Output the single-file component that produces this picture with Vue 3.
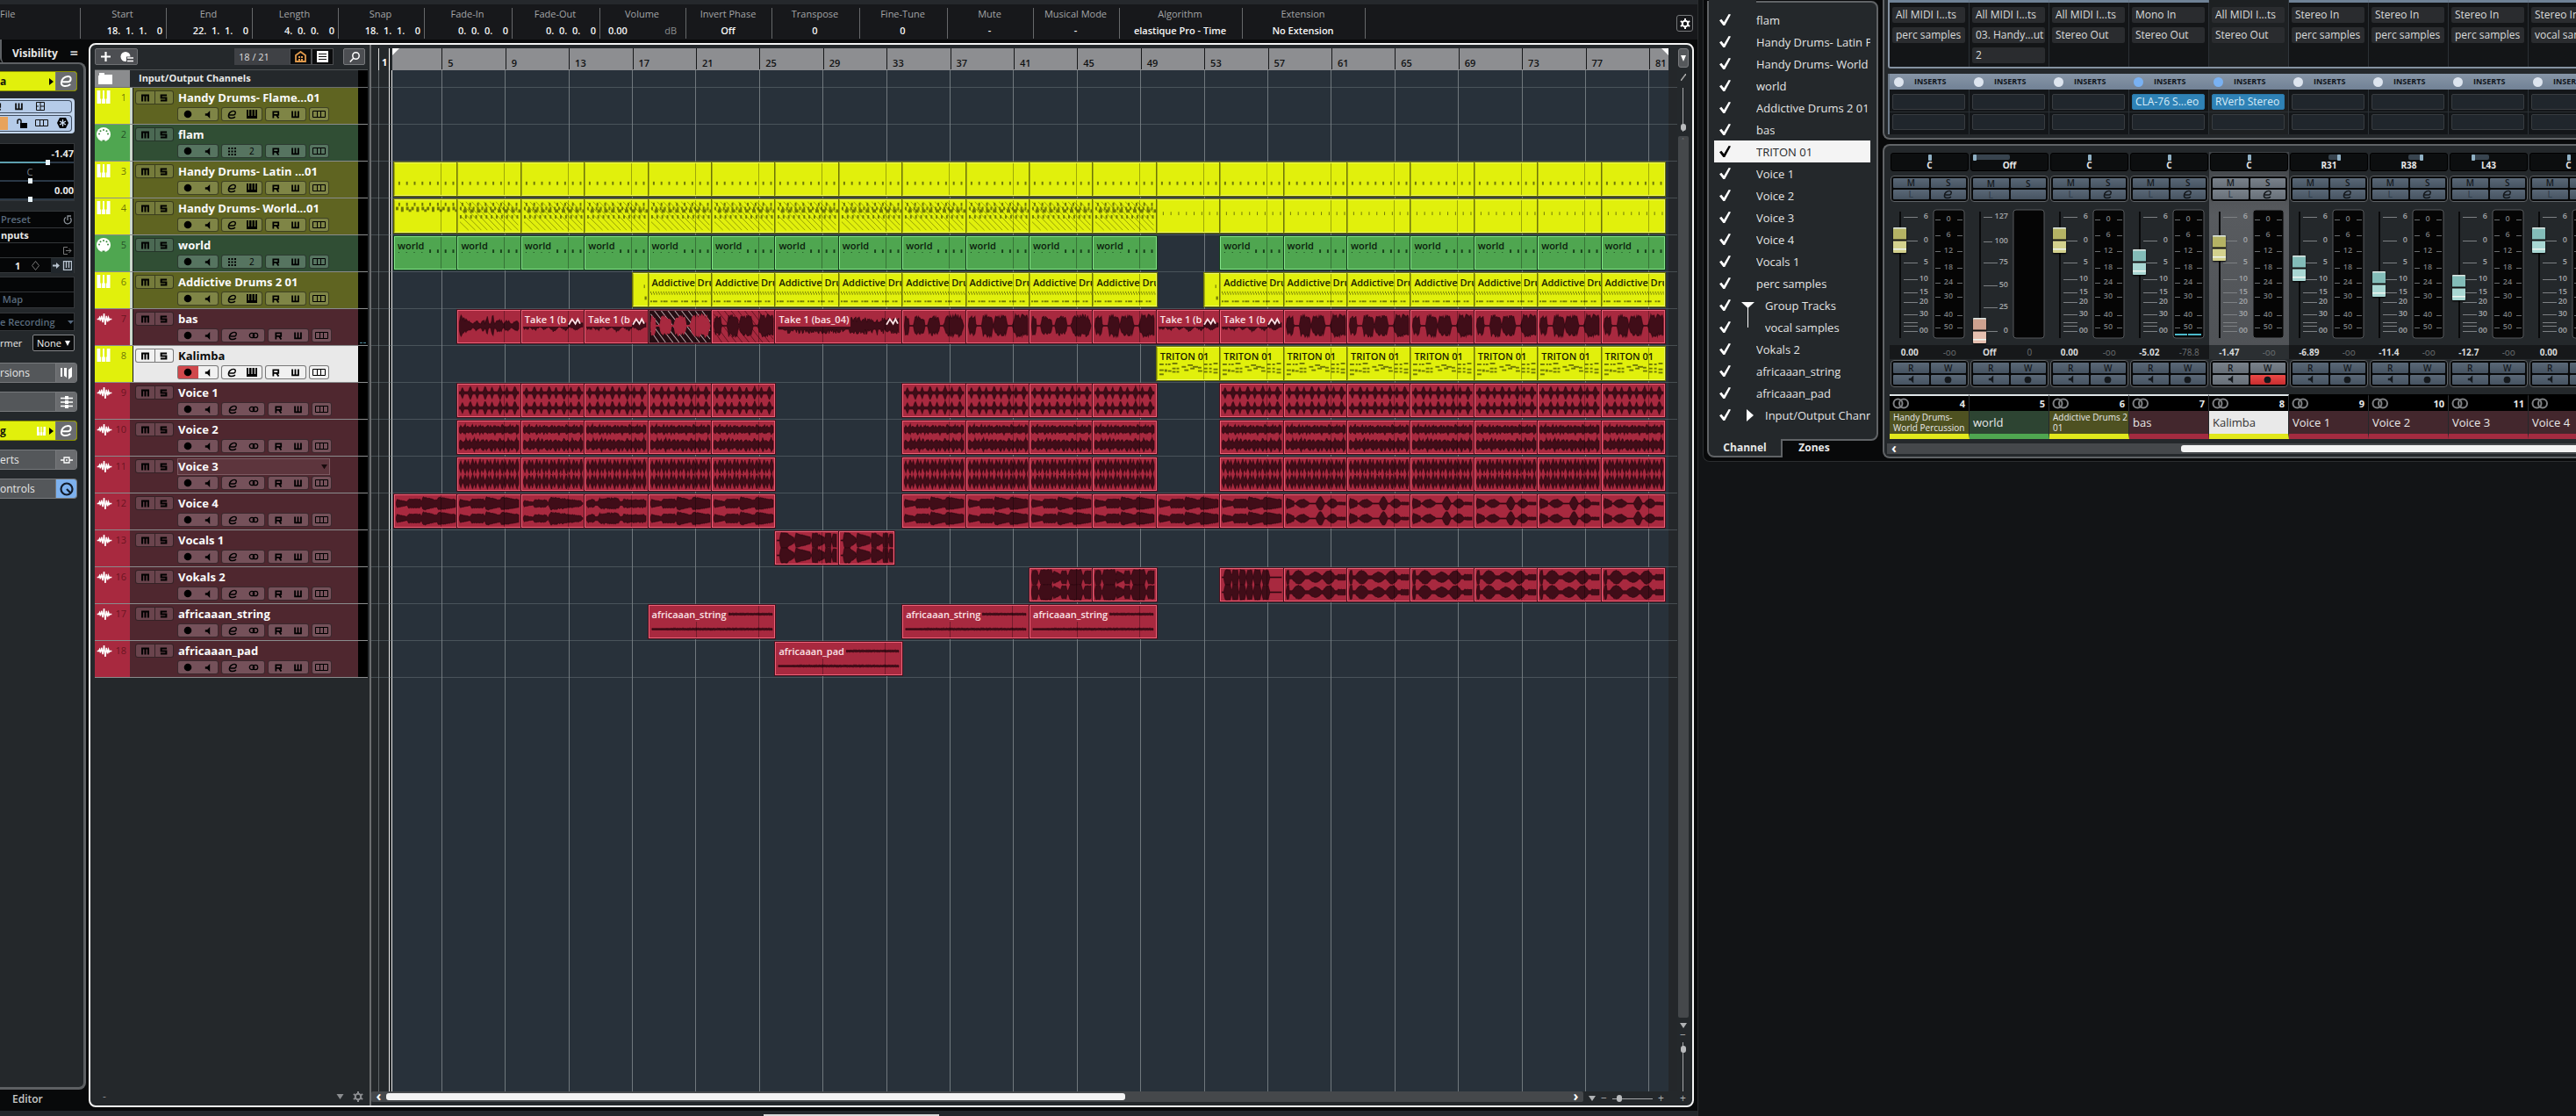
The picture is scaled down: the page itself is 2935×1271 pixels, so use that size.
<script setup>
const info = [
  { label: 'File', value: '', w: 92, kind: 'first' },
  { label: 'Start', value: '18.  1.  1.    0', w: 98, kind: 'right' },
  { label: 'End', value: '22.  1.  1.    0', w: 98, kind: 'right' },
  { label: 'Length', value: '4.  0.  0.    0', w: 98, kind: 'right' },
  { label: 'Snap', value: '18.  1.  1.    0', w: 98, kind: 'right' },
  { label: 'Fade-In', value: '0.  0.  0.    0', w: 100, kind: 'right' },
  { label: 'Fade-Out', value: '0.  0.  0.    0', w: 100, kind: 'right' },
  { label: 'Volume', value: '0.00', unit: 'dB', w: 98, kind: 'split' },
  { label: 'Invert Phase', value: 'Off', w: 98 },
  { label: 'Transpose', value: '0', w: 100 },
  { label: 'Fine-Tune', value: '0', w: 100 },
  { label: 'Mute', value: '-', w: 98 },
  { label: 'Musical Mode', value: '-', w: 98 },
  { label: 'Algorithm', value: 'elastique Pro - Time', w: 140 },
  { label: 'Extension', value: 'No Extension', w: 140 },
]

/* ---------- waveform drawing ---------- */
function random(seed) {
  let s = seed * 7919 + 13
  return () => {
    s = (s * 1103515245 + 12345) % 2147483648
    return s / 2147483648
  }
}
function wave(segs, cy, half, seed, base = 0.05, rough = 0.25, n = 72) {
  const r = random(seed)
  const up = []
  const down = []
  for (let i = 0; i <= n; i++) {
    const t = i / n
    let a = 0
    for (const [from, to, amp, shape] of segs) {
      if (t < from || t > to) continue
      const p = (t - from) / (to - from)
      let v = Math.min(1, Math.sin(Math.PI * p) * 2.4)
      if (shape === 'decay') v = Math.min(1, p * 9 + 0.35) * (1 - p * 0.55)
      if (shape === 'spike') v = 1 - Math.abs(p * 2 - 1)
      if (shape === 'round') v = Math.sin(Math.PI * p)
      a = Math.max(a, amp * v)
    }
    const u = Math.max(base, a * (1 - rough * r()))
    const d = Math.max(base, a * (1 - rough * r()))
    const x = (2 + t * 96).toFixed(2)
    up.push(`${x},${(cy - u * half).toFixed(2)}`)
    down.unshift(`${x},${(cy + d * half).toFixed(2)}`)
  }
  return 'M' + up.join('L') + 'L' + down.join('L') + 'Z'
}
const stereo = (segs, seed, base, rough, n, half = 9) => [
  wave(segs, 10, half, seed, base, rough, n),
  wave(segs, 28, half, seed, base, rough, n),
]
const spikes = (count, amp, width) =>
  Array.from({ length: count }, (_, i) => {
    const c = (i + 0.4) / count
    const a = i % 2 ? amp : amp * 0.85
    return [c - width / 2, c + width / 2 + (i % 2 ? 0.02 : 0), a, 'spike']
  })
const waves = {
  basIntro: [wave([[0, 0.12, 1, 'decay'], [0.08, 0.22, 0.6, 'decay'], [0.21, 0.38, 0.4, 'round'], [0.36, 0.44, 0.6, 'round'], [0.43, 0.5, 1, 'spike'], [0.52, 0.6, 1, 'spike'], [0.58, 0.76, 0.55, 'round'], [0.74, 0.88, 0.5, 'round'], [0.87, 1.04, 0.4, 'round']], 18, 16, 3, 0.15, 0.4)],
  basA: [wave([[0, 0.08, 0.9], [0.15, 0.35, 0.8], [0.39, 0.6, 0.8], [0.66, 1, 0.95]], 18, 15, 5, 0.04, 0.4)],
  basB: [wave([[0, 0.13, 0.8], [0.22, 0.42, 0.95], [0.42, 0.66, 0.85], [0.74, 1.04, 0.95]], 18, 15, 6, 0.04, 0.4)],
  take: [wave([[0, 0.1, 0.5], [0.08, 0.3, 0.6, 'round'], [0.25, 0.45, 0.5, 'round'], [0.4, 0.62, 0.7, 'round'], [0.6, 0.8, 0.6, 'round'], [0.76, 1, 0.6, 'round']], 17, 12, 8, 0.2, 0.4)],
  takeLong: [wave([[0, 0.6, 0.7], [0.58, 0.7, 0.8], [0.68, 0.8, 0.75], [0.8, 0.84, 1, 'spike'], [0.83, 1.05, 0.7]], 18, 14, 9, 0.3, 0.6, 140)],
  voice1: stereo(spikes(8, 1, 0.07), 2, 0.16, 0.15, 96),
  voice2: [wave(spikes(16, 0.9, 0.11), 10, 8, 4, 0.35, 0.45, 90), wave(spikes(14, 1, 0.12), 28, 9, 7, 0.3, 0.35, 90)],
  voice3: stereo(spikes(16, 1.1, 0.065), 5, 0.12, 0.2, 120),
  voice4a: stereo([[0, 0.19, 0.6, 'decay'], [0.17, 0.44, 0.62], [0.43, 0.7, 1, 'decay'], [0.68, 1.1, 0.95, 'decay']], 11, 0.2, 0.15),
  voice4b: stereo([[0, 0.16, 0.5, 'decay'], [0.15, 0.42, 0.55], [0.42, 0.98, 0.95, 'decay']], 12, 0.12, 0.25),
  voice4c: stereo([[0, 0.15, 0.6], [0.17, 0.58, 0.8], [0.56, 1.04, 0.6]], 13, 0.25, 0.35),
  voice4d: stereo([[0, 0.13, 0.8, 'decay'], [0.15, 0.4, 0.6, 'round'], [0.5, 0.65, 0.95, 'round'], [0.68, 0.88, 0.65, 'round'], [0.85, 1.1, 0.2]], 14, 0.07, 0.15),
  vocalsA: stereo([[0.04, 0.2, 1.05], [0.18, 0.28, 0.9, 'decay'], [0.3, 0.56, 1.05, 'decay'], [0.58, 0.7, 1], [0.69, 0.8, 0.9, 'decay'], [0.8, 0.92, 1], [0.92, 1.1, 0.9]], 15, 0.07, 0.1),
  vokalsA: stereo([[0, 0.11, 1], [0.12, 0.37, 1.05], [0.36, 0.48, 0.95, 'decay'], [0.49, 0.6, 0.9], [0.61, 0.87, 1.05], [0.87, 1.1, 0.9]], 16, 0.25, 0.1),
  vokalsB: stereo([[0.03, 0.16, 1.05], [0.16, 0.28, 1], [0.29, 0.4, 1.05], [0.41, 0.52, 1], [0.53, 0.66, 1.05], [0.67, 0.8, 1]], 17, 0.05, 0.1),
  vokalsC: stereo([[0, 0.05, 1], [0.08, 0.34, 0.95, 'round'], [0.36, 0.62, 0.75, 'round'], [0.6, 0.84, 0.95, 'round'], [0.84, 1.1, 0.4]], 18, 0.2, 0.15),
  flat: stereo([[0, 1.2, 0.16]], 19, 0.1, 0.5, 160),
}

/* ---------- note drawing, as [x, y, w, h] in a 72 x 38 box ---------- */
const row = (count, x0, step, y, w, h) =>
  Array.from({ length: count }, (_, i) => [x0 + i * step, y, w, h])
const notes = {
  pulses: row(8, 4, 9, 22, 2, 4),
  busyTop: [...row(8, 4, 9, 3, 2, 4), ...row(12, 1, 6, 8, 3, 4), ...row(8, 7, 9, 11, 3, 3)],
  busy: [...row(8, 4, 9, 3, 2, 4), ...row(14, 2, 5, 8, 2, 4), ...row(9, 6, 8, 11, 4, 4), ...row(12, 2, 6, 18, 2, 4)],
  ticks: row(8, 6, 9, 14, 1, 4),
  world: [...row(4, 4, 9, 18, 1, 1), ...row(4, 40, 9, 15, 2, 4)],
  kit: [...row(24, 1, 3, 21, 1, 2), ...row(24, 2, 3, 23, 1, 2), ...row(11, 1, 6, 32, 2, 2), ...row(6, 4, 12, 32, 3, 2)],
  pickup: [[52, 13, 5, 4], [56, 27, 10, 4]],
  melody: [[2, 19, 5, 2], [9, 19, 2, 2], [12, 19, 3, 2], [17, 18, 6, 2], [2, 26, 5, 2], [2, 31, 5, 2], [8, 26, 3, 3], [12, 27, 4, 2], [17, 24, 4, 2], [22, 24, 3, 2], [17, 28, 4, 2], [22, 28, 3, 2], [28, 22, 5, 2], [31, 26, 5, 2], [35, 20, 6, 2], [41, 22, 6, 2], [38, 24, 5, 2], [47, 23, 4, 2], [47, 27, 5, 2], [54, 19, 4, 2], [60, 19, 3, 2], [65, 18, 5, 2], [54, 24, 4, 2], [60, 24, 3, 2], [54, 28, 4, 2], [60, 28, 3, 2], [65, 25, 5, 2], [65, 29, 5, 2]],
}

const run = (from, to, extra) => {
  const out = []
  for (let b = from; b < to; b += 4) out.push({ bar: b, len: 4, ...extra })
  return out
}
const sung = (w) => [...run(6, 26, { wave: w }), ...run(34, 50, { wave: w }), ...run(54, 82, { wave: w })]
const take = { wave: 'take', label: 'Take 1 (b', take: true }

const tracks = [
  { n: 1, name: 'Handy Drums- Flame...01', type: 'inst', clips: [] },
  { n: 2, name: 'flam', type: 'midi', clips: [] },
  { n: 3, name: 'Handy Drums- Latin ...01', type: 'inst', clips: run(2, 82, { notes: 'pulses' }) },
  {
    n: 4, name: 'Handy Drums- World...01', type: 'inst',
    clips: [{ bar: 2, len: 4, notes: 'busyTop' }, ...run(6, 50, { notes: 'busy', hatch: true }), ...run(50, 82, { notes: 'ticks' })],
  },
  { n: 5, name: 'world', type: 'midi', clips: [...run(2, 50, { notes: 'world', label: 'world' }), ...run(54, 82, { notes: 'world', label: 'world' })] },
  {
    n: 6, name: 'Addictive Drums 2 01', type: 'inst',
    clips: [
      { bar: 17, len: 1, notes: 'pickup' }, ...run(18, 50, { notes: 'kit', label: 'Addictive Dru' }),
      { bar: 53, len: 1, notes: 'pickup' }, ...run(54, 82, { notes: 'kit', label: 'Addictive Dru' }),
    ],
  },
  {
    n: 7, name: 'bas', type: 'audio', sel: true,
    clips: [
      { bar: 6, len: 4, wave: 'basIntro' },
      ...run(10, 18, take),
      { bar: 18, len: 4, wave: 'basA', invert: true, hatch: true },
      { bar: 22, len: 4, wave: 'basB', hatch: true },
      { bar: 26, len: 8, wave: 'takeLong', label: 'Take 1 (bas_04)', take: true },
      { bar: 34, len: 4, wave: 'basA' }, { bar: 38, len: 4, wave: 'basB' },
      { bar: 42, len: 4, wave: 'basA' }, { bar: 46, len: 4, wave: 'basB' },
      ...run(50, 58, take),
      ...run(58, 82, { wave: 'basB' }),
    ],
  },
  { n: 8, name: 'Kalimba', type: 'inst', active: true, clips: run(50, 82, { notes: 'melody', label: 'TRITON 01' }) },
  { n: 9, name: 'Voice 1', type: 'audio', clips: sung('voice1') },
  { n: 10, name: 'Voice 2', type: 'audio', clips: sung('voice2') },
  { n: 11, name: 'Voice 3', type: 'audio', hover: true, clips: sung('voice3') },
  {
    n: 12, name: 'Voice 4', type: 'audio',
    clips: [
      ...run(2, 10, { wave: 'voice4a' }), { bar: 10, len: 4, wave: 'voice4b' }, { bar: 14, len: 4, wave: 'voice4c' },
      ...run(18, 26, { wave: 'voice4a' }), ...run(34, 58, { wave: 'voice4a' }), ...run(58, 82, { wave: 'voice4d' }),
    ],
  },
  { n: 13, name: 'Vocals 1', type: 'audio', clips: [{ bar: 26, len: 4, wave: 'vocalsA' }, { bar: 30, len: 3.5, wave: 'vocalsA' }] },
  { n: 16, name: 'Vokals 2', type: 'audio', clips: [...run(42, 50, { wave: 'vokalsA' }), { bar: 54, len: 4, wave: 'vokalsB' }, ...run(58, 82, { wave: 'vokalsC' })] },
  {
    n: 17, name: 'africaaan_string', type: 'audio',
    clips: [18, 34, 42].map((bar) => ({ bar, len: 8, wave: 'flat', label: 'africaaan_string' })),
  },
  { n: 18, name: 'africaaan_pad', type: 'audio', clips: [{ bar: 26, len: 8, wave: 'flat', label: 'africaaan_pad' }] },
]
for (const t of tracks) if (t.n < 7) t.sel = true
const trackIcon = { inst: 'keys', midi: 'din', audio: 'audio' }

const span = (c) => ({ gridColumn: `${(c.bar - 2) * 2 + 1} / span ${c.len * 2}` })
const barLines = (c) => {
  const out = []
  for (let b = 5; b <= 81; b += 4) if (b > c.bar && b < c.bar + c.len) out.push(((b - c.bar) / c.len) * 100)
  return out
}
const ruler = Array.from({ length: 20 }, (_, i) => 5 + i * 4)

/* ---------- mixer ---------- */
const list = [
  'flam', 'Handy Drums- Latin Pe', 'Handy Drums- World P', 'world', 'Addictive Drums 2 01', 'bas',
  'TRITON 01', 'Voice 1', 'Voice 2', 'Voice 3', 'Voice 4', 'Vocals 1', 'perc samples', 'Group Tracks', 'vocal samples',
  'Vokals 2', 'africaaan_string', 'africaaan_pad', 'Input/Output Channe',
]
const strips = [
  { n: 4, name: 'Handy Drums- World Percussion', small: true, color: 'y', io: ['All MIDI I...ts', 'perc samples'], pan: 'C', c: 273, v: '0.00', p: '-oo', cap: 'yel', sel: true },
  { n: 5, name: 'world', color: 'g', io: ['All MIDI I...ts', '03. Handy...ut', '2'], pan: 'Off', bar: [3, 44], c: 375, v: 'Off', p: '0', cap: 'pink', ctrl: true, sel: true },
  { n: 6, name: 'Addictive Drums 2 01', small: true, color: 'y', io: ['All MIDI I...ts', 'Stereo Out'], pan: 'C', c: 273, v: '0.00', p: '-oo', cap: 'yel', sel: true },
  { n: 7, name: 'bas', color: 'r', io: ['Mono In', 'Stereo Out'], fx: 'CLA-76 S...eo', pan: 'C', c: 298, v: '-5.02', p: '-78.8', cap: 'teal', sel: true, level: true },
  { n: 8, name: 'Kalimba', color: 'k', io: ['All MIDI I...ts', 'Stereo Out'], fx: 'RVerb Stereo', pan: 'C', c: 282, v: '-1.47', p: '-oo', cap: 'yel', sel: true, active: true },
  { n: 9, name: 'Voice 1', color: 'r', io: ['Stereo In', 'perc samples'], pan: 'R31', bar: [43, 57], c: 305, v: '-6.89', p: '-oo', cap: 'teal' },
  { n: 10, name: 'Voice 2', color: 'r', io: ['Stereo In', 'perc samples'], pan: 'R38', bar: [43, 60], c: 322, v: '-11.4', p: '-oo', cap: 'teal' },
  { n: 11, name: 'Voice 3', color: 'r', io: ['Stereo In', 'perc samples'], pan: 'L43', bar: [25, 44], c: 326, v: '-12.7', p: '-oo', cap: 'teal' },
  { n: 12, name: 'Voice 4', color: 'r', io: ['Stereo In', 'vocal samples'], pan: 'C', c: 273, v: '0.00', p: '-oo', cap: 'teal' },
]
const dbScale = [[6, 9], [0, 36], [5, 61], [10, 80], [15, 95], [20, 106], [30, 120], ['00', 139]]
const midiScale = [[127, 9], [100, 37], [75, 61], [50, 87], [25, 112], [0, 139]]
const meterScale = [[0, 11], [6, 29], [12, 47], [18, 66], [24, 83], [30, 99], [40, 120], [50, 134]]
const panMark = (s) => {
  if (!s.bar) return 44
  return s.pan.startsWith('R') ? s.bar[1] - 2 : s.bar[0] + 1
}
const tickEnd = (t) => (String(t).length > 2 ? 25 : 31)
</script>

<template>
  <div class="page">
    <svg class="defs" aria-hidden="true">
      <symbol id="keys" viewBox="0 0 16 16"><path d="M0 0H4V10H5V16H0ZM6 10H7V0H9V10H10V16H6ZM11 10H12V0H16V16H11Z" fill="#fff" /></symbol>
      <symbol id="din" viewBox="0 0 16 16"><circle cx="8" cy="8" r="8" fill="#fff" /><g fill="#3c8a3e"><circle cx="3" cy="7.500" r="1" /><circle cx="4.500" cy="4.300" r="1" /><circle cx="8" cy="3" r="1" /><circle cx="11.500" cy="4.300" r="1" /><circle cx="13" cy="7.500" r="1" /><path d="M6.500 14.500H9.500V16H6.500Z" /></g></symbol>
      <symbol id="audio" viewBox="0 0 18 14"><path d="M0 7H2L3 5L4 9L5.500 3L7 11L8.500 0L10 14L11.500 3L13 10L14 5L15 8L16 7H18" fill="none" stroke="#fff" stroke-width="1.600" /></symbol>
      <symbol id="m" viewBox="0 0 10 9"><path d="M1.200 9V1.200H8.800V9M5 1V9" fill="none" stroke="currentColor" stroke-width="2.300" /></symbol>
      <symbol id="s" viewBox="0 0 10 9"><path d="M9 1.200H1.800V4.500H8.200V7.800H1" fill="none" stroke="currentColor" stroke-width="2.200" /></symbol>
      <symbol id="r" viewBox="0 0 10 9"><path d="M1.500 9V1H8V5H2M5.500 5L8.300 9" fill="none" stroke="currentColor" stroke-width="2" /></symbol>
      <symbol id="w" viewBox="0 0 10 9"><path d="M1.200 0V7.800H8.800V0M5 0V8" fill="none" stroke="currentColor" stroke-width="2" /></symbol>
      <symbol id="rec" viewBox="0 0 10 10"><circle cx="5" cy="5" r="4.300" fill="currentColor" /></symbol>
      <symbol id="mon" viewBox="0 0 10 10"><path d="M2 3.500H4.500L8 0V10L4.500 6.500H2Z" fill="currentColor" /></symbol>
      <symbol id="e" viewBox="0 0 12 12"><path d="M2.500 6.600H7.800C10.600 6.200 11.200 1.500 7.600 1.500C4.200 1.500 1.500 4.600 1.500 7.400C1.500 11.200 6.500 11.200 9.800 8.800" fill="none" stroke="currentColor" stroke-width="1.600" /></symbol>
      <symbol id="piano" viewBox="0 0 12 10"><path d="M0 0H2V7H3V0H5.500V7H6.500V0H9V7H10V0H12V10H0Z" fill="currentColor" /></symbol>
      <symbol id="link" viewBox="0 0 12 8"><circle cx="4" cy="4" r="2.700" fill="none" stroke="currentColor" stroke-width="1.300" /><circle cx="8" cy="4" r="2.700" fill="none" stroke="currentColor" stroke-width="1.300" /></symbol>
      <symbol id="lanes" viewBox="0 0 15 8"><path d="M.5 .5H14.500V7.500H.5ZM5.500 0V8M9.500 0V8" fill="none" stroke="currentColor" /></symbol>
      <symbol id="dots" viewBox="0 0 9 9"><path d="M0 1H9M0 4.500H9M0 8H9" stroke="currentColor" stroke-width="2" stroke-dasharray="2 1.500" /></symbol>
      <symbol id="gear" viewBox="0 0 12 12"><circle cx="6" cy="6" r="3.200" fill="none" stroke="currentColor" stroke-width="2" /><path d="M6 0V2.500M6 9.500V12M.8 3L3 4.300M9 7.700L11.200 9M11.200 3L9 4.300M3 7.700L.8 9" stroke="currentColor" stroke-width="2" /></symbol>
      <symbol id="tri" viewBox="0 0 8 6"><path d="M0 0H8L4 6Z" fill="currentColor" /></symbol>
      <symbol id="zig" viewBox="0 0 14 9"><path d="M1 8L4.500 2L8 7L10.500 2L13 7" fill="none" stroke="currentColor" stroke-width="1.700" /></symbol>
    </svg>

    <section class="daw">
      <header class="infoline">
        <div v-for="c in info" :key="c.label" class="cell" :class="c.kind" :style="{ width: c.w + 'px' }">
          <span class="lab">{{ c.label }}</span>
          <span class="val">{{ c.value }}<i v-if="c.unit">{{ c.unit }}</i></span>
        </div>
        <button class="cog" aria-label="Set up info line"><svg width="12" height="12"><use href="#gear" /></svg></button>
      </header>

      <div class="work">
        <aside class="inspector">
          <div class="tabs"><a href="#visibility">Visibility</a><span class="menu">=</span></div>
          <div class="body">
            <div class="head yellow"><b>a</b><svg width="5" height="8" class="arrow"><path d="M0 0L5 4L0 8Z" /></svg><button aria-label="Edit instrument"><svg width="15" height="15"><use href="#e" /></svg></button></div>
            <div class="bluebox">
              <div><svg width="9" height="9"><use href="#r" /></svg><svg width="9" height="9"><use href="#w" /></svg><svg width="10" height="10" viewBox="0 0 10 10"><path d="M.5 .5H9.500V9.500H.5ZM5 0V10M5 5H10M0 5H3" fill="none" stroke="#111" /></svg></div>
              <div><span class="orange"></span><svg width="12" height="11" viewBox="0 0 12 11"><path d="M4 5H12V11H4Z" /><path d="M1 6V3A2 2 0 0 1 5 3V5" fill="none" stroke="#111" stroke-width="1.500" /></svg><svg width="15" height="8"><use href="#lanes" /></svg><svg width="13" height="12" viewBox="0 0 13 12"><path d="M3 0H10L13 6L10 12H3L0 6Z" /><path d="M6.500 2V10M3 4L10 8M10 4L3 8" stroke="#cfe0f5" stroke-width="1.300" /></svg></div>
            </div>
            <div class="black sliders">
              <b>-1.47</b><input type="range" aria-label="Volume" class="blue" value="66" /><i>C</i><input type="range" aria-label="Pan" value="40" /><b>0.00</b><input type="range" aria-label="Delay" value="40" />
            </div>
            <div class="black io">
              <div class="dim">Preset<svg width="10" height="11" viewBox="0 0 10 11"><path d="M3 2.500A4 4 0 1 0 8 3M5 6V1L9 1" fill="none" stroke="#8a9097" stroke-width="1.300" /></svg></div>
              <div><b>nputs</b></div>
              <div><span></span><svg width="10" height="9" viewBox="0 0 10 9"><path d="M5 .5H.5V8.500H5M3 4.500H9M6.500 2L9 4.500L6.500 7" fill="none" stroke="#777" /></svg></div>
              <div class="one"><b>1</b><svg width="9" height="11" viewBox="0 0 9 11"><path d="M4.500 .5L8.500 5.500L4.500 10.500L.5 5.500Z" fill="none" stroke="#777" /></svg><span class="route"><svg width="22" height="11" viewBox="0 0 22 11"><path d="M0 4.500H4V2L8 5.500L4 9V6.500H0Z" fill="#b8c3cf" /><path d="M12.500 .5H21.500V10.500H12.500ZM15.500 0V8M18.500 0V8" fill="none" stroke="#b8c3cf" stroke-width="1.300" /></svg></span></div>
            </div>
            <div class="black map"><div></div><div class="dim">&nbsp;Map</div></div>
            <div class="black recd dim">e Recording<svg width="7" height="4"><path d="M0 0H7L3.500 4Z" fill="#56697f" /></svg></div>
            <label class="former">rmer<select><option>None</option></select></label>
            <div class="bars">
              <div class="head"><span>rsions</span><button aria-label="Versions"><svg width="14" height="14" viewBox="0 0 14 14"><path d="M0 1H2V11H0ZM4 1H7V12L4 10ZM9 3L13 0V11L9 14Z" /></svg></button></div>
              <div class="head"><span></span><button aria-label="Equalizers"><svg width="14" height="14" viewBox="0 0 14 14"><path d="M0 2.500H14M0 7H14M0 11.500H14" stroke="#fff" stroke-width="1.500" /><path d="M5 0H9V4H5ZM5 5H9V9H5ZM5 10H9V14H5Z" /></svg></button></div>
              <div class="head yellow"><b>g</b><svg width="10" height="10" class="kb"><use href="#keys" /></svg><svg width="5" height="8" class="arrow"><path d="M0 0L5 4L0 8Z" /></svg><button aria-label="Edit channel"><svg width="15" height="15"><use href="#e" /></svg></button></div>
              <div class="head"><span>erts</span><button aria-label="Inserts"><svg width="14" height="8" viewBox="0 0 14 8"><path d="M0 4H4M10 4H14M4 1H10V7H4ZM6 4H8" fill="none" stroke="#fff" stroke-width="1.300" /></svg></button></div>
              <div class="head"><span>ontrols</span><button class="lit" aria-label="Quick controls"><svg width="16" height="16" viewBox="0 0 16 16"><circle cx="8" cy="8" r="6.500" fill="none" stroke="#121c2c" stroke-width="2.200" /><path d="M8 8L12 12" stroke="#121c2c" stroke-width="2.200" /></svg></button></div>
            </div>
          </div>
          <div class="editor"><a href="#editor">Editor</a></div>
        </aside>

        <main class="project">
          <div class="tracklist">
            <div class="tools">
              <div class="add"><button aria-label="Add track"><svg width="11" height="11" viewBox="0 0 11 11"><path d="M5.500 0V11M0 5.500H11" stroke="#fff" stroke-width="2.200" /></svg></button><button aria-label="Use preset"><svg width="15" height="12" viewBox="0 0 15 12"><circle cx="6" cy="5.500" r="5.500" fill="#fff" /><path d="M7 5.500H15V12H7Z" fill="#4c4e52" /><path d="M8 7H15M8 10.500H15" stroke="#fff" stroke-width="1.500" /></svg></button></div>
              <span class="count">18 / 21</span>
              <button class="tg" aria-label="Track visibility"><svg width="13" height="13" viewBox="0 0 13 13"><path d="M1 5L6.500 1L12 5V12H1Z" fill="none" stroke="#e09a4c" stroke-width="1.800" /><path d="M4 6H6V8H4ZM7 6H9V8H7ZM4 9H6V11H4ZM7 9H9V11H7Z" fill="#e09a4c" /></svg></button>
              <button class="tg" aria-label="Divide list"><svg width="13" height="13" viewBox="0 0 13 13"><path d="M0 0H13V13H0Z" fill="#fff" /><path d="M2 3.500H11M2 6.500H11M2 9.500H11" stroke="#111" stroke-width="1.200" /></svg></button>
              <button class="find" aria-label="Find tracks"><svg width="12" height="12" viewBox="0 0 12 12"><circle cx="7.500" cy="4.500" r="3.700" fill="none" stroke="#fff" stroke-width="1.500" /><path d="M5 7L.8 11.500" stroke="#fff" stroke-width="1.500" /></svg></button>
            </div>
            <div class="folder"><span><svg width="16" height="13" viewBox="0 0 16 13"><path d="M0 3H1V0H7V2H16V13H0Z" fill="#fff" /></svg></span><b>Input/Output Channels</b></div>

            <div v-for="t in tracks" :key="t.n" class="track" :class="[t.type, { active: t.active, sel: t.sel }]">
              <div class="tag"><svg :width="t.type === 'audio' ? 18 : 16" :height="t.type === 'inst' ? 15 : t.type === 'midi' ? 16 : 13"><use :href="'#' + trackIcon[t.type]" /></svg><span>{{ t.n }}</span></div>
              <div class="stripe"></div>
              <div class="ctl">
                <div class="top">
                  <div class="grp ms"><button aria-label="Mute"><svg width="9" height="9"><use href="#m" /></svg></button><button aria-label="Solo"><svg width="9" height="9"><use href="#s" /></svg></button></div>
                  <span class="name" :class="{ hover: t.hover }">{{ t.name }}<svg v-if="t.hover" width="7" height="7" viewBox="0 0 8 6"><use href="#tri" /></svg></span>
                </div>
                <div class="bot">
                  <div class="grp"><button class="rec" aria-label="Record enable"><svg width="10" height="10"><use href="#rec" /></svg></button><button aria-label="Monitor"><svg width="9" height="9"><use href="#mon" /></svg></button></div>
                  <div v-if="t.type === 'midi'" class="grp"><button aria-label="Channel"><svg width="9" height="9"><use href="#dots" /></svg></button><button>2</button></div>
                  <div v-else class="grp mid"><button aria-label="Edit"><svg width="11" height="11"><use href="#e" /></svg></button><button :aria-label="t.type === 'inst' ? 'Instrument' : 'Stereo'"><svg width="12" :height="t.type === 'inst' ? 10 : 8"><use :href="t.type === 'inst' ? '#piano' : '#link'" /></svg></button></div>
                  <div class="grp"><button aria-label="Read automation"><svg width="9" height="9"><use href="#r" /></svg></button><button aria-label="Write automation"><svg width="9" height="9"><use href="#w" /></svg></button></div>
                  <div class="grp one"><button aria-label="Show lanes"><svg width="15" height="8"><use href="#lanes" /></svg></button></div>
                </div>
              </div>
              <div class="vu"><i v-if="t.n === 7"></i></div>
            </div>
            <div class="tlfoot"><span>-</span><svg width="9" height="6"><use href="#tri" /></svg><svg width="12" height="12"><use href="#gear" /></svg></div>
          </div>

          <div class="arrange">
            <div class="ruler">
              <div class="pre">1</div>
              <div class="scale">
                <span v-for="b in ruler" :key="b" :style="{ gridColumn: `${b - 1} / span ${b === 81 ? 1 : 4}` }">{{ b }}</span>
              </div>
            </div>
            <div class="field">
              <svg class="grid" width="100%" height="100%" aria-hidden="true">
                <line v-for="b in ruler" :key="b" :x1="(b - 2) * 1.25 + '%'" :x2="(b - 2) * 1.25 + '%'" y1="0" y2="100%" />
              </svg>
              <div class="lane short"></div>
              <div v-for="t in tracks" :key="t.n" class="lane">
                <div v-for="c in t.clips" :key="c.bar" class="clip" :class="[t.type, { invert: c.invert, take: c.take }]" :style="span(c)">
                  <svg v-if="c.notes" class="art" viewBox="0 0 72 38" preserveAspectRatio="none">
                    <path v-if="c.hatch" class="hatch" d="M2 2L34 36M9 2L41 36M16 2L48 36M23 2L55 36M30 2L62 36M37 2L70 36M44 2L70 30M51 2L70 22M58 2L70 15M2 10L27 36M2 18L20 36M2 26L12 36" />
                    <rect v-for="(r, i) in notes[c.notes]" :key="i" :x="r[0]" :y="r[1]" :width="r[2]" :height="r[3]" />
                  </svg>
                  <svg v-else class="art" viewBox="0 0 100 38" preserveAspectRatio="none">
                    <path v-if="c.hatch && !c.invert" class="hatch" d="M2 4L38 38M2 14L26 38M2 24L15 38M8 0L48 38M19 0L59 38M30 0L70 38M41 0L81 38M52 0L92 38M63 0L98 34M74 0L98 24M85 0L98 13" />
                    <path v-if="c.invert" class="stripes" d="M2 4L38 38M2 14L26 38M2 24L15 38M8 0L48 38M19 0L59 38M30 0L70 38M41 0L81 38M52 0L92 38M63 0L98 34M74 0L98 24M85 0L98 13" />
                    <path v-for="(w, i) in waves[c.wave]" :key="i" class="wave" :d="w" />
                  </svg>
                  <svg class="art" width="100%" height="100%"><line v-for="x in barLines(c)" :key="x" class="bar" :x1="x + '%'" :x2="x + '%'" y1="0" y2="100%" /></svg>
                  <span v-if="c.label" class="label">{{ c.label }}</span>
                  <svg v-if="c.take" class="zig" width="15" height="10"><use href="#zig" /></svg>
                </div>
              </div>
            </div>
            <div class="hscroll">
              <div class="rail"><button aria-label="Scroll left">‹</button><div class="thumb"></div><button aria-label="Scroll right">›</button></div>
              <div class="zoom"><svg width="8" height="6"><use href="#tri" /></svg><span>−</span><input type="range" aria-label="Horizontal zoom" value="12" /><span>+</span></div>
            </div>
          </div>

          <div class="vcol">
            <button aria-label="Zoom presets"><svg width="6" height="7" viewBox="0 0 8 6" preserveAspectRatio="none"><use href="#tri" /></svg></button>
            <svg class="slash" width="6" height="8" viewBox="0 0 6 8"><path d="M0 8L6 0" stroke="#aaa" stroke-width="1.500" /></svg>
            <input type="range" class="v" aria-label="Waveform zoom" value="2" />
            <div class="vrail"><span>˄</span></div>
            <svg width="8" height="6"><use href="#tri" /></svg><span>−</span>
            <input type="range" class="v low" aria-label="Vertical zoom" value="92" /><span>+</span>
          </div>
        </main>
      </div>
      <footer class="foot"><div></div></footer>
    </section>

    <section class="mixwin">
      <nav class="listpanel">
        <div class="entries">
          <label v-for="(l, i) in list" :key="l" :class="{ on: i === 6, deep: i === 13 || i === 14 || i === 18 }">
            <input type="checkbox" checked />
            <svg v-if="i === 13" class="fold" width="15" height="29" viewBox="0 0 15 29"><path d="M0 0H15L7.500 7Z" fill="#fff" /><path d="M7.500 5V29" stroke="#fff" /></svg>
            <svg v-if="i === 18" class="fold side" width="8" height="14" viewBox="0 0 8 14"><path d="M0 0V14L8 7Z" fill="#fff" /></svg>
            <span>{{ l }}</span>
          </label>
        </div>
        <div class="lt"><a href="#channel" class="cur">Channel</a><a href="#zones">Zones</a></div>
      </nav>

      <div class="mixer">
        <div class="rack">
          <div class="strips routing">
            <div v-for="s in strips" :key="s.n" class="strip" :class="{ active: s.active }">
              <button v-for="r in s.io" :key="r">{{ r }}</button>
            </div>
          </div>
          <div class="strips inserts">
            <div v-for="s in strips" :key="s.n" class="strip" :class="{ active: s.active }">
              <div class="ih"><i :class="{ lit: s.fx }"></i><b>INSERTS</b></div>
              <div class="slots"><button :class="{ fx: s.fx }" aria-label="Insert 1">{{ s.fx }}</button><button aria-label="Insert 2"></button></div>
            </div>
          </div>
        </div>

        <div class="desk">
          <div class="strips">
            <div v-for="s in strips" :key="s.n" class="strip" :class="{ active: s.active }">
              <div class="upper">
                <div class="pan">
                  <svg width="88" height="9" viewBox="0 0 88 9"><rect v-if="s.bar" :x="s.bar[0]" y="1" :width="s.bar[1] - s.bar[0]" height="6" rx="2" fill="#38444f" /><rect :x="panMark(s) - 2" y="1" width="4" height="7" rx="1" fill="#8fb0c4" /></svg>
                  <b>{{ s.pan }}</b>
                </div>
                <div class="quad"><button>M</button><button>S</button><button class="off">L</button><button aria-label="Edit channel"><svg v-if="!s.ctrl" width="11" height="11"><use href="#e" /></svg></button></div>
                <div class="fader">
                  <svg class="ticks" width="46" height="148">
                    <path d="M11 3V147" stroke-width="2" />
                    <g v-for="[t, y] in s.ctrl ? midiScale : dbScale" :key="t"><path :d="`M15 ${y + 0.5}H${tickEnd(t)}`" /><text x="43" :y="y + 2">{{ t }}</text></g>
                    <path v-if="!s.ctrl" d="M15 129.500H31M15 133.500H31" />
                  </svg>
                  <input type="range" class="cap" :class="s.cap" aria-label="Level" min="0" max="132" :value="376 - s.c" />
                  <svg class="meter" width="37" height="148">
                    <rect x="1" y="1" width="35" height="146" rx="3" />
                    <template v-if="!s.ctrl"><g v-for="[t, y] in meterScale" :key="t"><path :d="`M3 ${y + 1.5}H9M28 ${y + 1.5}H34`" /><text x="18" :y="y + 3">{{ t }}</text></g></template>
                    <path v-if="s.level" class="lvl" d="M3 143H17M18 143H33" />
                  </svg>
                </div>
              </div>
              <div class="vals"><b>{{ s.v }}</b><span>{{ s.p }}</span></div>
              <div class="quad rw"><button>R</button><button>W</button><button aria-label="Monitor"><svg width="9" height="10"><use href="#mon" /></svg></button><button aria-label="Record enable" :class="{ armed: s.active }"><svg width="9" height="9"><use href="#rec" /></svg></button></div>
              <div class="num" :class="{ sel: s.sel }"><svg v-if="!s.ctrl" width="20" height="13" viewBox="0 0 20 13"><circle cx="6.500" cy="6.500" r="5" /><circle cx="13" cy="6.500" r="5" /></svg><b>{{ s.n }}</b></div>
              <div class="nm" :class="['c-' + s.color, { small: s.small }]"><span>{{ s.name }}</span></div>
            </div>
          </div>
          <div class="mscroll"><button aria-label="Scroll left">‹</button><div></div></div>
        </div>
      </div>
    </section>
  </div>
</template>

<style>
html, body { margin: 0; background: #121416; }
</style>

<style scoped>
* { box-sizing: border-box; }
.page { display: flex; min-height: 100vh; background: #121416; color: #e8e8e8; font: 12px/16px "Open Sans", "Noto Sans", sans-serif; overflow: hidden; }
.defs { position: absolute; width: 0; height: 0; }
button, select, input { font: inherit; color: inherit; margin: 0; }
button { border: 0; background: none; padding: 0; display: flex; align-items: center; justify-content: center; }
a { color: inherit; text-decoration: none; }
svg { display: block; flex: none; }
i { font-style: normal; }

.daw { flex: 1; min-width: 0; display: flex; flex-direction: column; background: #08090a; border-right: 1px solid #2a2c2e; }
.infoline { display: flex; height: 45px; border-top: 5px solid #25282c; background: #17181b; padding-top: 4px; }
.cell { flex: none; height: 35px; border-right: 1px solid #66686a; text-align: center; white-space: pre; font-size: 11px; padding-right: 2px; }
.lab { display: block; height: 17px; line-height: 14px; color: #a3a5a7; }
.val { display: block; height: 18px; line-height: 18px; font-weight: 600; color: #f6f6f6; }
.cell.right .val { text-align: right; padding-right: 2px; }
.cell.split .val { display: flex; justify-content: space-between; padding: 0 8px 0 9px; }
.cell.split i { color: #8c8e90; font-weight: 400; }
.cell.first .lab { text-align: left; }
.cog { margin: 8px 5px 0 auto; width: 19px; height: 19px; border: 1px solid #77797b; border-radius: 3px; color: #fff; }

.work { flex: 1; display: flex; gap: 3px; }
.inspector { width: 98px; display: flex; flex-direction: column; overflow: hidden; }
.tabs { display: flex; justify-content: space-between; height: 27px; margin-bottom: -1px; line-height: 31px; padding: 0 9px 0 12px; font-weight: 700; border-left: 2px solid #5d6063; border-bottom-left-radius: 6px; }
.menu { font-size: 16px; color: #c8c8c8; }
.body { flex: 1; background: #24282b; border: 3px solid #5d6063; border-left: 0; border-top-width: 2px; border-radius: 0 8px 8px 0; padding-top: 8px; }
.editor { height: 24px; line-height: 22px; padding-left: 14px; font-size: 12px; font-weight: 600; color: #c9c9c9; }
.head { width: 88px; height: 23px; display: flex; align-items: center; background: #54575a; border: 1px solid #77797c; border-left: 0; border-radius: 0 4px 4px 0; font-size: 12px; }
.head button { width: 24px; height: 21px; border-left: 1px solid #77797c; color: #fff; fill: #fff; margin-left: auto; background: #6a6c6f; border-radius: 0 3px 3px 0; }
.head .lit { background: #7db1ee; }
.head.yellow { background: #e1f00c; color: #16180a; border-color: #8b9000; }
.head.yellow button { margin-left: 2px; }
.head .arrow { margin-left: auto; }
.head .kb { margin-left: 35px; }
.bluebox { width: 85px; height: 40px; margin-top: 8px; background: #c3d6ee; border-radius: 0 4px 4px 0; padding: 2px 3px 2px 0; display: grid; gap: 2px; color: #111; }
.bluebox div { display: flex; align-items: center; justify-content: space-between; border: 1px solid #3f4d60; border-left: 0; border-radius: 0 4px 4px 0; background: #b5cbe8; }
.bluebox div:first-child { padding: 0 30px 0 0; }
.bluebox div:last-child { padding: 0 3px 0 0; }
.bluebox svg:first-child { margin-left: -7px; }
.orange { width: 9px; height: 15px; background: #e8a35c; }
.black { width: 85px; background: #050607; border: 1px solid #34373a; border-left: 0; }
.dim { color: #596a7c; font-weight: 600; }
.sliders { margin-top: 11px; height: 66px; font-size: 11px; line-height: 16px; text-align: right; padding-top: 3px; }
.sliders b, .sliders i { display: block; height: 15px; }
.sliders i { text-align: center; padding-right: 16px; color: #737b82; }
.sliders input { display: block; appearance: none; width: 84px; height: 6px; background: linear-gradient(#2a3846, #2a3846) center / 100% 2px no-repeat; }
.sliders input.blue { background-image: linear-gradient(90deg, #5d9fae 55px, #2a3846 55px); }
.sliders input::-webkit-slider-thumb { appearance: none; width: 5px; height: 6px; background: #e9f4fa; }
.io { margin-top: 11px; height: 71px; }
.io div { display: flex; align-items: center; justify-content: space-between; height: 17px; border-bottom: 1px solid #34373a; padding: 0 2px 0 1px; font-size: 11px; }
.io div:first-child { height: 19px; }
.io .one { padding: 0 0 0 17px; border: 0; }
.route { background: #20262b; padding: 3px 2px; }
.map { margin-top: 4px; height: 36px; font-size: 11px; }
.map div { height: 17px; border-bottom: 1px solid #34373a; }
.map div + div { border: 0; }
.recd { margin-top: 5px; height: 21px; display: flex; align-items: center; justify-content: space-between; font-size: 11px; }
.former { position: relative; display: flex; justify-content: space-between; align-items: center; width: 85px; margin-top: 4px; height: 19px; font-size: 11px; }
.former select { width: 48px; height: 19px; appearance: none; border: 1px solid #85878a; border-radius: 2px; padding: 0 0 0 4px; line-height: 16px; background: #0a0b0c; color: #f2f2f2; }
.former::after { content: ""; position: absolute; right: 5px; top: 7px; width: 6px; height: 6px; background: #fff; clip-path: polygon(0 0, 100% 0, 50% 100%); }
.bars { display: grid; gap: 10px; margin-top: 13px; }

.project { flex: 1; min-width: 0; display: flex; margin: 4px 4px 4px 0; border: 2px solid #f4f4f4; border-radius: 8px; background: #24282b; }
.tracklist { width: 320px; flex: none; padding: 4px 2px 0 5px; border-right: 2px solid #6c6e70; display: flex; flex-direction: column; }
.tools { display: flex; height: 19px; margin-bottom: 5px; padding-right: 3px; }
.add { display: flex; width: 49px; background: #4c4e52; border: 1px solid #6e7073; border-radius: 2px; }
.add button { flex: 1; }
.count { margin-left: auto; width: 63px; background: #3f4145; padding-left: 5px; font-size: 11px; line-height: 19px; color: #ddd; }
.tg { width: 25px; background: #0b0c0d; border: 1px solid #4b4d50; }
.find { width: 25px; margin-left: 11px; background: #4c4e52; border: 1px solid #77797c; border-radius: 2px; }
.folder { display: flex; height: 21px; border-top: 1px solid #4f5254; border-bottom: 1px solid #6d6f71; line-height: 18px; background: linear-gradient(90deg, #24282b 300px, #000 300px); font-size: 11px; }
.folder span { width: 40px; background: #8b8c8e; padding: 3px 4px; margin-right: 10px; }
.track { display: flex; height: 42px; border-bottom: 1px solid #8a8c8d; --tag: #a8293f; --bg: #4f272f; --btn: #75515a; }
.inst { --tag: #e1f00c; --bg: #5f6421; --btn: #7f8546; }
.midi { --tag: #4fa650; --bg: #304e34; --btn: #567460; }
.track.active { --bg: #e9e9e9; --btn: #f4f4f4; }
.tag { width: 40px; background: var(--tag); display: flex; justify-content: space-between; padding: 3px 4px 0 2px; font-size: 11px; line-height: 16px; color: rgba(0, 0, 0, .55); }
.audio .tag { padding-top: 5px; line-height: 12px; color: rgba(40, 0, 0, .5); }
.stripe { width: 4px; background: var(--bg); }
.sel .stripe { background: linear-gradient(90deg, #ccd8cc 3px, #16181a 3px); }
.active .stripe { background: linear-gradient(90deg, #e1f00c 3px, #16181a 3px); }
.ctl { flex: 1; background: var(--bg); padding: 3px 0 0 2px; }
.top { display: flex; height: 19px; }
.grp { display: flex; width: 47px; height: 16px; margin-right: 3px; border: 1px solid rgba(0, 0, 0, .5); border-radius: 3px; background: var(--btn); color: #000; font-size: 10px; }
.grp button { flex: 1; }
.ms { width: 44px; margin-right: 5px; background: color-mix(in srgb, var(--btn) 70%, var(--bg)); }
.ms button + button { border-left: 1px solid rgba(0, 0, 0, .5); }
.bot { display: flex; padding-left: 48px; }
.bot .one { width: 23px; }
.audio .bot .mid { width: 50px; }
.active .grp { background: #f1f1f1; }
.active .rec { background: #d0484c; }
.name { height: 17px; line-height: 17px; font-size: 13px; font-weight: 700; color: #fafafa; white-space: nowrap; }
.name.hover { display: flex; align-items: center; justify-content: space-between; width: 172px; background: #5d353d; box-shadow: 0 0 0 1px #7d5a62; }
.name.hover svg { color: #170a0c; margin-right: 2px; }
.active .name { color: #0b0c0d; }
.vu { width: 11px; background: #000; display: flex; align-items: flex-end; }
.vu i { width: 8px; height: 1px; margin: 0 0 2px 2px; background: repeating-linear-gradient(90deg, #4f8ba0 0 3px, transparent 3px 4px); }
.tlfoot { margin-top: auto; height: 21px; display: flex; align-items: center; gap: 10px; color: #8b8d90; padding: 0 5px 0 9px; }
.tlfoot span { margin-right: auto; }

.arrange { flex: 1; min-width: 0; display: flex; flex-direction: column; padding-top: 4px; }
.ruler { display: flex; height: 25px; padding-right: 10px; }
.pre { width: 24px; background: linear-gradient(90deg, transparent 8px, #ddd 8px 9px, transparent 9px 20px, #fff 20px 21px, transparent 21px); padding-left: 12px; line-height: 32px; font-size: 11px; font-weight: 700; color: #fff; }
.scale { position: relative; flex: 1; min-width: 0; display: grid; grid-template-columns: repeat(80, minmax(0, 1fr)); padding: 0 4px 0 2px; background: #8d8e91; color: #101112; }
.scale span { grid-row: 1; border-left: 1px solid #17181a; padding-left: 6px; line-height: 33px; font-size: 11px; font-weight: 600; height: 24px; }
.scale::before, .scale::after { content: ""; position: absolute; top: 0; left: 0; width: 8px; height: 8px; background: #fff; clip-path: polygon(0 0, 100% 0, 0 100%); }
.scale::after { left: auto; right: 0; clip-path: polygon(0 0, 100% 0, 100% 100%); }
.field { position: relative; flex: 1; background: linear-gradient(90deg, #24282b 8px, #606568 8px 9px, #24282b 9px 20px, #e8e8e8 20px 21px, #24282b 21px 23px, #e8e8e8 23px 24px, #28313a 24px calc(100% - 10px), #24272a calc(100% - 10px)); }
.grid { position: absolute; inset: 0; left: 26px; width: calc(100% - 40px); height: 100%; shape-rendering: crispEdges; }
.grid line { stroke: #70787d; }
.lane { position: relative; height: 42px; border-bottom: 1px solid rgba(120, 130, 135, .42); padding: 1px 14px 2px 26px; display: grid; grid-template-columns: repeat(160, minmax(0, 1fr)); }
.lane.short { height: 20px; }
.clip { position: relative; grid-row: 1; min-width: 0; height: 38px; overflow: hidden; display: flex; justify-content: space-between; border: 1px solid #ec6076; background: #a8293f; outline: 1px solid #47101d; color: #fbe3e6; }
.clip.inst { background: #e1f00c; border-color: #eef868; border-left-color: #a3ad18; outline-color: #6d7300; color: #1a1c00; }
.clip.midi { background: #4fa650; border-color: #83e388; outline-color: #143c1c; color: #0a1c0b; }
.art { position: absolute; inset: 0; width: 100%; height: 100%; }
.wave { fill: #400d18; stroke: #21060c; stroke-opacity: .55; stroke-width: 1px; vector-effect: non-scaling-stroke; }
.inst rect { fill: #6f7808; }
.midi rect { fill: #17401a; }
.hatch { fill: none; stroke: rgba(90, 95, 0, .55); stroke-width: 1px; vector-effect: non-scaling-stroke; }
.audio .hatch { stroke: rgba(60, 5, 15, .6); }
.clip.invert { background: #260d13; border-color: #80404c; }
.stripes { stroke: #b9a5a9; stroke-width: 1px; vector-effect: non-scaling-stroke; }
.invert .wave { fill: #a8293f; stroke: #a8293f; stroke-opacity: 1; }
.bar { stroke: rgba(0, 0, 0, .3); shape-rendering: crispEdges; }
.label { position: relative; padding: 0 2px 0 3px; height: 18px; line-height: 20px; font-size: 11px; font-weight: 600; white-space: nowrap; overflow: hidden; }
.audio .label { background: #a8293f; }
.zig { position: relative; margin: 7px 3px 0 0; }
.hscroll { height: 16px; display: flex; }
.rail { flex: 1; height: 12px; margin-right: 1px; display: flex; align-items: center; background: #45484b; border-radius: 2px; }
.rail button { width: 17px; height: 12px; font: 700 16px/10px "Open Sans", sans-serif; padding-bottom: 3px; color: #fff; }
.rail button:last-child { margin-left: auto; }
.thumb { width: 61%; height: 8px; background: #f3f3f3; border-radius: 3px; }
.zoom { width: 106px; display: flex; align-items: center; gap: 6px; padding-left: 5px; color: #b0b2b4; line-height: 14px; }
.zoom input, .v { appearance: none; width: 46px; height: 9px; background: linear-gradient(#a5a7a9, #a5a7a9) center / 100% 1px no-repeat; }
.zoom input::-webkit-slider-thumb, .v::-webkit-slider-thumb { appearance: none; width: 6px; height: 8px; border-radius: 4px; background: #b9bbbd; }
.vcol { width: 17px; flex: none; display: flex; flex-direction: column; align-items: center; padding: 4px 4px 0 0; color: #b0b2b4; line-height: 12px; }
.vcol button { width: 12px; height: 22px; background: #55585b; border: 1px solid #7a7c7f; border-radius: 3px; color: #fff; }
.slash { margin: 7px 0 8px; }
.v { writing-mode: vertical-lr; direction: rtl; width: 9px; height: 50px; background: linear-gradient(#a5a7a9, #a5a7a9) center / 1px 100% no-repeat; }
.v.low { height: 56px; }
.vrail { flex: 1; width: 12px; margin: 5px 0 6px; background: #45484b; border-radius: 2px; text-align: center; font-size: 9px; color: #888; }
.vcol > span { margin: 2px 0; }
.foot { height: 6px; background: #22262a; padding-top: 4px; }
.foot div { margin-left: 45%; width: 200px; height: 2px; background: #d8d8d8; }

.mixwin { position: relative; width: 995px; flex: none; height: 526px; margin-left: 5px; display: flex; gap: 5px; padding-left: 4px; background: #08090a; border: 1px solid #2b2d2f; border-width: 0 0 1px 1px; border-bottom-left-radius: 8px; overflow: hidden; }
.listpanel { width: 195px; flex: none; display: flex; flex-direction: column; }
.entries { position: relative; height: 501px; margin-top: 1px; background: #24282b; border: 2px solid #606366; border-radius: 0 8px 8px 0; padding: 7px 7px 0 6px; }
.entries::before { content: ""; position: absolute; left: 0; top: -3px; width: 54px; height: 6px; background: #24282b; }
.entries label { position: relative; display: flex; align-items: center; height: 25px; padding-left: 6px; font-size: 13px; white-space: nowrap; overflow: hidden; color: #e3e4e4; }
.entries .on { background: #f4f4f4; color: #26282a; }
.entries input { appearance: none; width: 13px; height: 13px; margin-right: 29px; flex: none; background: currentColor; clip-path: polygon(0 55%, 18% 45%, 40% 72%, 82% 0, 100% 4%, 48% 100%, 34% 100%); color: #fff; }
.entries .on input { color: #000; }
.entries .deep input { margin-right: 39px; }
.entries label:has(.fold) { overflow: visible; }
.entries label span { overflow: hidden; }
.fold { position: absolute; left: 31px; top: 9px; }
.fold.side { left: 37px; top: 6px; }
.lt { display: flex; height: 21px; margin-top: -2px; position: relative; font-weight: 700; line-height: 20px; }
.lt a { width: 86px; text-align: center; }
.lt .cur { background: #24282b; border: 2px solid #606366; border-top: 0; border-bottom-left-radius: 8px; }
.lt a + a { width: 72px; }
.mixer { flex: 1; min-width: 0; display: flex; flex-direction: column; gap: 5px; }
.rack { height: 159px; overflow: hidden; background: #24282b; border: 2px solid #606366; border-width: 0 0 2px 2px; border-bottom-left-radius: 8px; padding-left: 4px; }
.strips { display: flex; }
.strip { width: 91px; flex: none; }
.routing { height: 78px; border: 2px solid #8592a1; border-width: 0 0 2px 2px; background: linear-gradient(#6f8296 3px, #131517 3px); border-radius: 0 0 0 3px; }
.rack .strip { border-right: 1px solid rgba(90, 100, 110, .35); }
.routing .strip { padding: 8px 4px 0 3px; display: grid; grid-auto-rows: 18px; gap: 5px; }
.routing button { justify-content: flex-start; padding-left: 4px; background: #2a2c2f; border-radius: 2px; font-size: 12px; color: #dcdddd; white-space: nowrap; }
.inserts { margin-top: 6px; border-left: 2px solid #6d7a88; background: #131619; }
.ih { display: flex; align-items: center; gap: 12px; height: 18px; padding-left: 5px; background: linear-gradient(#8796a7, #718195); color: #10151b; font-size: 9px; margin-right: -1px; }
.ih i { width: 11px; height: 11px; border-radius: 6px; background: #dde5ef; }
.ih i.lit { background: #79b1f2; }
.slots { padding: 5px 4px 6px 3px; display: grid; gap: 5px; height: 51px; grid-auto-rows: 18px; background: linear-gradient(transparent 25px, #2b2f33 25px 26px, transparent 26px); }
.slots button { border: 1px solid #383c40; border-radius: 2px; background: #20262c; justify-content: flex-start; padding-left: 4px; white-space: nowrap; }
.slots .fx { background: #2f82b6; border-color: #2a78a9; color: #d9edf8; padding-left: 3px; }
.rack .active { background-color: #1d2022; }
.desk { flex: 1; background: #24282b; border: 2px solid #606366; border-right: 0; border-radius: 8px 0 0 8px; margin-bottom: 3px; padding-left: 6px; overflow: hidden; }
.upper { height: 227px; padding: 8px 1px 0; }
.desk .active .upper { background: linear-gradient(#3c4044, #585b5f 35%, #505357); box-shadow: inset 0 7px #24282b; }
.pan { height: 21px; background: #0c0e0f; border: 1px solid #000; border-radius: 3px; font-size: 9px; line-height: 9px; text-align: center; }
.pan b { display: block; font-size: 10px; }
.pan svg { margin: 0 auto; }
.quad { display: grid; grid-template-columns: 1fr 1fr; gap: 2px; height: 30px; margin: 5px 0 0; padding: 2px; background: #08090a; border: 1px solid #5f6367; border-radius: 4px; font-size: 10px; line-height: 10px; font-weight: 600; color: #14181c; }
.quad button { background: linear-gradient(#5a6877, #465361); border-radius: 1px; overflow: hidden; }
.quad .off { color: #35404b; }
.active .quad button { background: linear-gradient(#7a828b, #666e77); }
.quad .armed.armed { background: linear-gradient(#ec4a48, #c82d2f); }
.fader { display: grid; grid-template-columns: 48px 37px; margin-top: 8px; }
.ticks, .fader .cap { grid-column: 1; grid-row: 1; }
.ticks path { stroke: #7d8083; fill: none; }
.ticks text { font-size: 9px; font-weight: 600; text-anchor: end; fill: #a4a7aa; }
.ticks > path:first-child { stroke: #08090a; }
.cap { appearance: none; writing-mode: vertical-lr; direction: rtl; width: 15px; height: 162px; margin: -8px 0 -6px 3px; background: none; --c: #a9d7d3; --d: #83bcb8; }
.cap::-webkit-slider-thumb { appearance: none; width: 15px; height: 29px; border-radius: 1px; background: linear-gradient(#dfe9e5 0 1px, var(--d) 2px 13px, #111 14px 15px, var(--c) 16px 24px, #eef5f0 24px 25px, var(--c) 26px); box-shadow: 0 1px 2px #000; }
.cap.yel { --c: #d3d18d; --d: #b5b364; }
.cap.pink { --c: #e5bfaf; --d: #cda18f; }
.meter rect { fill: #050505; stroke: #56595c; stroke-width: 1px; }
.meter path { stroke: #6b6e70; }
.meter text { font-size: 9px; font-weight: 600; text-anchor: middle; fill: #787b7d; }
.meter .lvl { stroke: #4bb9cb; stroke-width: 2px; }
.vals { display: flex; height: 16px; background: #16181a; font-size: 10px; line-height: 16px; color: #d6d8d9; text-align: center; }
.vals b, .vals span { flex: 1; }
.vals span { color: #6c6f72; }
.desk .active .vals { background: #2b2f32; }
.rw { margin: 1px 1px 8px; height: 31px; }
.num { display: flex; align-items: center; height: 19px; padding: 0 4px 0 3px; background: #000; border-top: 2px solid #000; border-right: 1px solid #2b2e31; font-size: 11px; }
.num.sel { border-top-color: #dfe5e8; }
.num b { margin-left: auto; }
.num svg { fill: none; stroke: #7f8184; stroke-width: 2px; }
.nm { height: 32px; border-bottom: 6px solid #a32b40; border-right: 1px solid #24282b; background: #43272d; padding-left: 4px; display: flex; align-items: center; font-size: 13px; overflow: hidden; }
.nm.small { font-size: 10px; line-height: 12px; }
.c-y { background: #4e5121; border-bottom-color: #e1e81c; }
.c-g { background: #2d4432; border-bottom-color: #4fa650; }
.c-k { background: #e9e9e9; color: #333; border-bottom-color: #e1e81c; }
.mscroll { display: flex; align-items: center; height: 12px; margin: 5px 0 0 -3px; background: #45484b; }
.mscroll button { width: 16px; height: 12px; font: 700 16px/10px "Open Sans", sans-serif; color: #fff; padding-bottom: 3px; }
.mscroll div { flex: 1; height: 8px; margin-left: 319px; background: #f3f3f3; border-radius: 3px 0 0 3px; }
</style>
